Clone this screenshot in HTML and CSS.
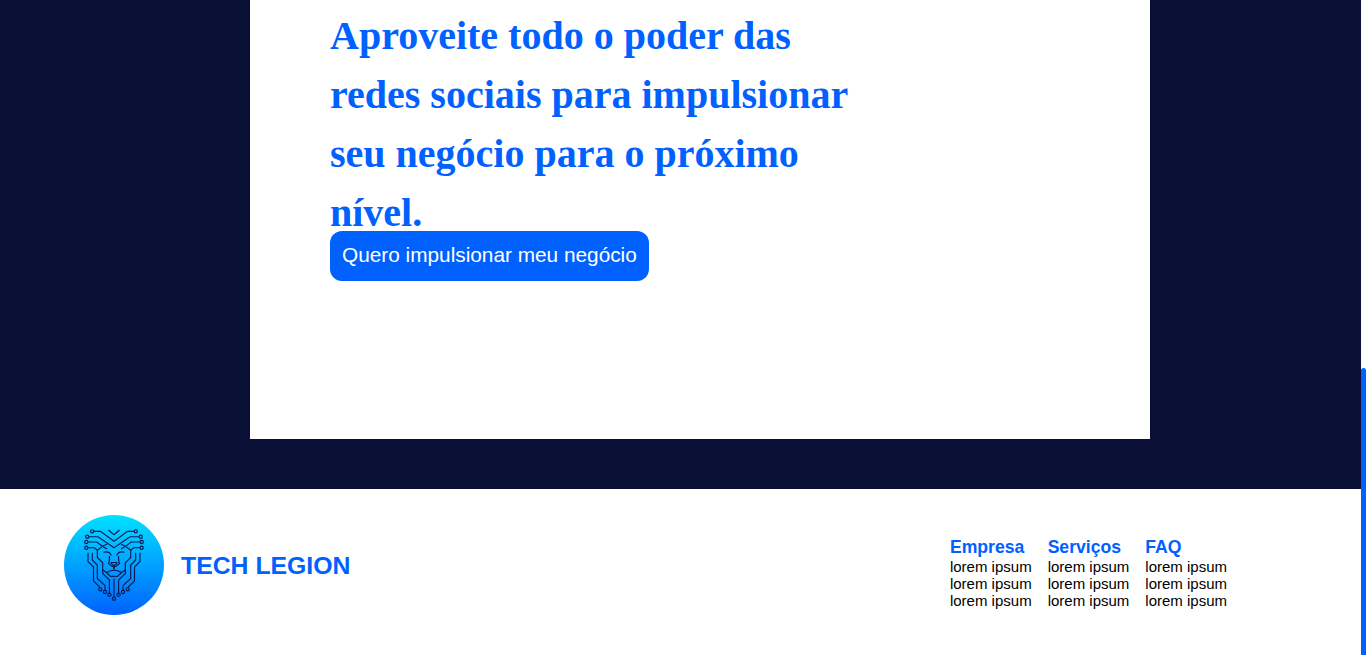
FILE: index.html
```html
<!DOCTYPE html>
<html lang="pt-BR">
<head>
<meta charset="utf-8">
<title>Tech Legion</title>
<link rel="stylesheet" href="styles.css">
</head>
<body>
<div class="page">
  <main class="hero">
    <section class="card">
      <h1 class="headline">Aproveite todo o poder das<br>redes sociais para impulsionar<br>seu negócio para o próximo<br>nível.</h1>
      <a class="cta" href="#"><span class="cta-text">Quero impulsionar meu negócio</span></a>
    </section>
  </main>
  <footer class="footer">
    <div class="brand">
      <svg class="logo" viewBox="0 0 100 100" aria-hidden="true">
        <defs>
          <linearGradient id="sky" x1="0" y1="0" x2="0" y2="1">
            <stop offset="0" stop-color="#00e1ff"/>
            <stop offset="1" stop-color="#0061ff"/>
          </linearGradient>
          <g id="half">
            <circle cx="28.2" cy="16.3" r="1.6"/>
            <circle cx="23.3" cy="21.7" r="1.6"/>
            <circle cx="22.3" cy="27" r="1.6"/>
            <circle cx="22.3" cy="32.7" r="1.6"/>
            <circle cx="36.3" cy="74.3" r="1.6"/>
            <circle cx="41" cy="77" r="1.6"/>
            <circle cx="45.4" cy="79.7" r="1.6"/>
            <path d="M44.5 15L50 19.8M29.8 16.3H36.5L50 26.3M24.9 21.7H34L50 32.7M23.9 27H32.7L38.5 31.2L43 34M23.9 32.7H30.3L33.3 35.2L38.5 31.2L43 29.2"/>
            <path d="M24 37.7V46.5L29.5 52V66L36.3 72.7M28.3 37.7V45L33.3 50V63.5L41 70.5V75.4M33.3 35.2V42.5L38.7 47.8V58.5L45.4 65V78.1"/>
            <path d="M39.5 37.3Q45.5 35.8 47.3 40.5M45.4 41V45.5L44.5 48.5L47.5 51L50 52M46.5 47.5H50M47 48L50 51M50 51V54.5M38.7 55L42.5 57.5L46.5 55.8L50 55.2M42.5 57.5L46.5 61.3H50"/>
          </g>
        </defs>
        <circle cx="50" cy="50" r="50" fill="url(#sky)"/>
        <g fill="none" stroke="#0b1a55" stroke-width="1.15">
          <use href="#half"/>
          <use href="#half" transform="translate(100 0) scale(-1 1)"/>
          <path d="M50 63.5V82"/>
          <circle cx="50" cy="83.7" r="1.6"/>
        </g>
      </svg>
      <span class="brand-name">TECH LEGION</span>
    </div>
    <nav class="links">
      <div class="col"><h2 class="col-title">Empresa</h2><p>lorem ipsum</p><p>lorem ipsum</p><p>lorem ipsum</p></div>
      <div class="col"><h2 class="col-title">Serviços</h2><p>lorem ipsum</p><p>lorem ipsum</p><p>lorem ipsum</p></div>
      <div class="col"><h2 class="col-title">FAQ</h2><p>lorem ipsum</p><p>lorem ipsum</p><p>lorem ipsum</p></div>
    </nav>
  </footer>
</div>
<div class="track"><div class="thumb"></div></div>
</body>
</html>
```
FILE: styles.css
```css
* { box-sizing: border-box; margin: 0; padding: 0; }
body {
  display: flex;
  height: 655px;
  overflow: hidden;
  font-family: "Liberation Sans", Arial, sans-serif;
  background: #0a1035;
}
.page { flex: 1; display: flex; flex-direction: column; }
.hero { height: 489px; padding: 0 211px 50px 250px; background: #0a1035; }
.card { display: flex; flex-direction: column; height: 439px; padding: 6px 0 0 80px; background: #fff; }
.headline {
  height: 225px;
  font: bold 40px/59px "Liberation Serif", "Times New Roman", serif;
  color: #0061ff;
  white-space: nowrap;
}
.cta {
  display: flex;
  width: 319px;
  height: 50px;
  padding: 12px;
  border-radius: 12px;
  background: #0061ff;
  color: #fff;
  font-size: 20.8px;
  line-height: 24px;
  text-decoration: none;
  white-space: nowrap;
}
.footer {
  flex: 1;
  display: flex;
  justify-content: space-between;
  padding: 26px 134px 0 64px;
  background: #fff;
}
.brand { display: flex; align-items: center; gap: 17px; height: 100px; }
.logo { width: 100px; height: 100px; }
.brand-name { padding-top: 1px; font-size: 24.8px; font-weight: bold; color: #0061ff; }
.links { display: flex; gap: 16px; padding-top: 22px; }
.col { font-size: 15px; line-height: 17px; color: #000; }
.col-title { font-size: 17.6px; line-height: 21px; color: #0061ff; }
.track { width: 5px; padding-top: 368px; background: #fff; }
.thumb { height: 287px; border-radius: 3px 3px 0 0; background: #0061ff; }
```
